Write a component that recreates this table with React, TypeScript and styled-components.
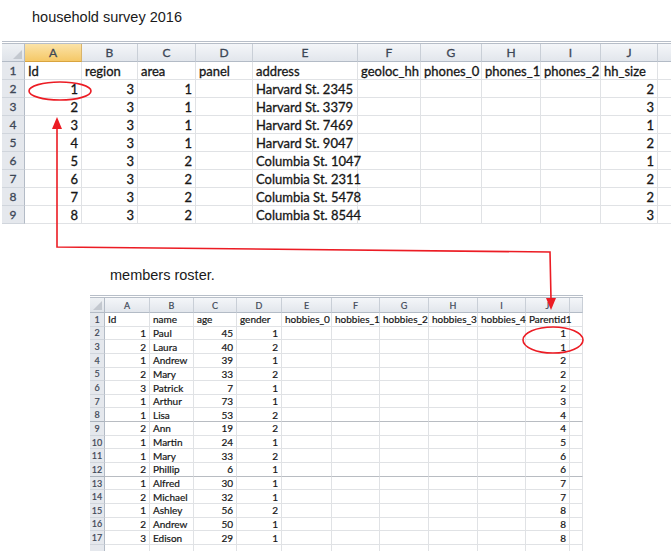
import React from 'react';
import styled, { createGlobalStyle, css } from 'styled-components';

const Global = createGlobalStyle`
  html, body { margin: 0; padding: 0; background: #ffffff; }
  body { font-family: "Liberation Sans", Arial, sans-serif; }
`;

const Page = styled.div`
  position: relative;
  width: 671px;
  height: 551px;
  overflow: hidden;
  background: #ffffff;
`;

const Caption = styled.div<{ $indent: number; $top: number; $height: number }>`
  box-sizing: border-box;
  height: ${(p) => p.$height}px;
  padding: ${(p) => p.$top}px 0 0 ${(p) => p.$indent}px;
  font: 14.5px/18px "Liberation Sans", Arial, sans-serif;
  color: #1a1a1a;
`;

const Sheet = styled.div<{ $cols: number[]; $left: number; $head: number; $row: number; $font: number; $headFont: number; $stroke: number }>`
  display: grid;
  grid-template-columns: ${(p) => p.$cols.map((c) => `${c}px`).join(' ')};
  grid-template-rows: ${(p) => p.$head}px;
  grid-auto-rows: ${(p) => p.$row}px;
  width: max-content;
  margin-left: ${(p) => p.$left}px;
  border-top: 3px double #b7bec8;
  font-family: Lato, "Liberation Sans", sans-serif;
  font-size: ${(p) => p.$font}px;
  -webkit-text-stroke: ${(p) => p.$stroke}px currentColor;
  --head-font: ${(p) => p.$headFont}px;
`;

const headBase = css`
  box-sizing: border-box;
  display: flex;
  align-items: center;
  justify-content: center;
  font-size: var(--head-font);
  color: #3d4756;
  white-space: nowrap;
`;

const ColHead = styled.div<{ $selected?: boolean }>`
  ${headBase};
  background: linear-gradient(#f4f6f9, #e2e6ec);
  border-right: 1px solid #c9cfd7;
  border-bottom: 1px solid #b3bbc6;
  ${(p) =>
    p.$selected &&
    css`
      background: linear-gradient(#fbe3a8, #f5c867);
      border-bottom: 1px solid #d9a43f;
      border-right: 1px solid #d9b46a;
    `}
`;

const Corner = styled.div`
  ${headBase};
  position: relative;
  background: linear-gradient(#eef1f4, #dfe3e9);
  border-right: 1px solid #b3bbc6;
  border-bottom: 1px solid #b3bbc6;
  &::after {
    content: '';
    position: absolute;
    right: 2px;
    bottom: 2px;
    width: 9px;
    height: 9px;
    background: #c3c8cf;
    clip-path: polygon(100% 0, 100% 100%, 0 100%);
  }
`;

const RowHead = styled.div<{ $break?: boolean }>`
  ${headBase};
  background: #e5e8ed;
  border-right: 1px solid #b3bbc6;
  border-bottom: 1px solid ${(p) => (p.$break ? '#aab2bc' : '#d0d5dc')};
`;

const Cell = styled.div<{ $num?: boolean; $break?: boolean }>`
  box-sizing: border-box;
  display: flex;
  align-items: center;
  justify-content: ${(p) => (p.$num ? 'flex-end' : 'flex-start')};
  padding: 0 3px;
  border-right: 1px solid #e0e2e5;
  border-bottom: 1px solid ${(p) => (p.$break ? '#b8bcc2' : '#e0e2e5')};
  color: #161616;
  white-space: nowrap;
  overflow: visible;
`;

const Overlay = styled.svg`
  position: absolute;
  left: 0;
  top: 0;
  width: 671px;
  height: 551px;
  pointer-events: none;
`;

type Val = string | number;

const topCols = [23, 57, 56, 58, 57, 105, 63, 61, 59, 60, 57, 40];
const topLetters = ['A', 'B', 'C', 'D', 'E', 'F', 'G', 'H', 'I', 'J', ''];
const topHeader = ['Id', 'region', 'area', 'panel', 'address', 'geoloc_hh', 'phones_0', 'phones_1', 'phones_2', 'hh_size', ''];
const topRows: Val[][] = [
  [1, 3, 1, '', 'Harvard St. 2345', '', '', '', '', 2, ''],
  [2, 3, 1, '', 'Harvard St. 3379', '', '', '', '', 3, ''],
  [3, 3, 1, '', 'Harvard St. 7469', '', '', '', '', 1, ''],
  [4, 3, 1, '', 'Harvard St. 9047', '', '', '', '', 2, ''],
  [5, 3, 2, '', 'Columbia St. 1047', '', '', '', '', 1, ''],
  [6, 3, 2, '', 'Columbia St. 2311', '', '', '', '', 2, ''],
  [7, 3, 2, '', 'Columbia St. 5478', '', '', '', '', 2, ''],
  [8, 3, 2, '', 'Columbia St. 8544', '', '', '', '', 3, ''],
];

const botCols = [15, 45, 44, 43, 45, 50, 48, 49, 49, 48, 44, 13];
const botLetters = ['A', 'B', 'C', 'D', 'E', 'F', 'G', 'H', 'I', 'J', ''];
const botHeader = ['Id', 'name', 'age', 'gender', 'hobbies_0', 'hobbies_1', 'hobbies_2', 'hobbies_3', 'hobbies_4', 'Parentid1', ''];
const members: [number, string, number, number, number][] = [
  [1, 'Paul', 45, 1, 1],
  [2, 'Laura', 40, 2, 1],
  [1, 'Andrew', 39, 1, 2],
  [2, 'Mary', 33, 2, 2],
  [3, 'Patrick', 7, 1, 2],
  [1, 'Arthur', 73, 1, 3],
  [1, 'Lisa', 53, 2, 4],
  [2, 'Ann', 19, 2, 4],
  [1, 'Martin', 24, 1, 5],
  [1, 'Mary', 33, 2, 6],
  [2, 'Phillip', 6, 1, 6],
  [1, 'Alfred', 30, 1, 7],
  [2, 'Michael', 32, 1, 7],
  [1, 'Ashley', 56, 2, 8],
  [2, 'Andrew', 50, 1, 8],
  [3, 'Edison', 29, 1, 8],
];
const botRows: Val[][] = members.map(([id, name, age, gender, parent]) => [id, name, age, gender, '', '', '', '', '', parent, '']);

function SheetRows({ letters, header, rows, selected, breaks = [], stub = false }: {
  letters: string[];
  header: string[];
  rows: Val[][];
  selected?: number;
  breaks?: number[];
  stub?: boolean;
}) {
  return (
    <>
      <Corner />
      {letters.map((l, i) => (
        <ColHead key={`c${i}`} $selected={i === selected}>{l}</ColHead>
      ))}
      <RowHead $break={breaks.includes(1)}>1</RowHead>
      {header.map((h, i) => (
        <Cell key={`h${i}`} $break={breaks.includes(1)}>{h}</Cell>
      ))}
      {rows.map((r, ri) => {
        const n = ri + 2;
        const br = breaks.includes(n);
        return (
          <React.Fragment key={`r${ri}`}>
            <RowHead $break={br}>{n}</RowHead>
            {r.map((v, ci) => (
              <Cell key={ci} $num={typeof v === 'number'} $break={br}>{v}</Cell>
            ))}
          </React.Fragment>
        );
      })}
      {stub && (
        <>
          <RowHead />
          {letters.map((_, i) => (
            <Cell key={`s${i}`} />
          ))}
        </>
      )}
    </>
  );
}

export default function App() {
  return (
    <Page>
      <Global />
      <Caption $indent={32} $top={8} $height={41}>household survey 2016</Caption>
      <Sheet $cols={topCols} $left={2} $head={18} $row={18} $font={13} $headFont={12} $stroke={0.3}>
        <SheetRows letters={topLetters} header={topHeader} rows={topRows} selected={0} />
      </Sheet>
      <Caption $indent={110} $top={42} $height={71}>members roster.</Caption>
      <Sheet $cols={botCols} $left={90} $head={15} $row={13.65} $font={10} $headFont={9} $stroke={0.2}>
        <SheetRows letters={botLetters} header={botHeader} rows={botRows} breaks={[8, 12]} stub />
      </Sheet>
      <Overlay viewBox="0 0 671 551">
        <g fill="none" stroke="#ec1c24" strokeWidth={1.6}>
          <ellipse cx={60} cy={91} rx={31} ry={9} />
          <ellipse cx={553} cy={340} rx={30} ry={13} />
          <polyline points="57,127 57,247 550,252 551,299" strokeLinejoin="miter" />
        </g>
        <g fill="#ec1c24">
          <polygon points="57,117 52,129 62,129" />
          <polygon points="551,310 546,298 556,298" />
        </g>
      </Overlay>
    </Page>
  );
}
